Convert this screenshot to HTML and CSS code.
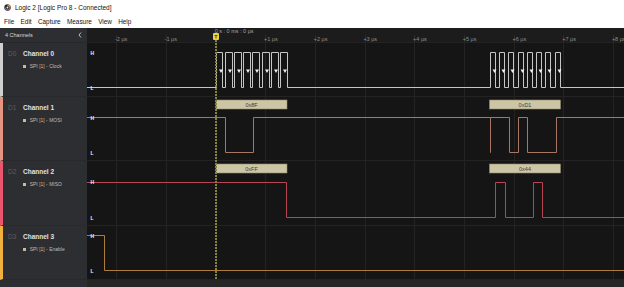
FILE: index.html
```html
<!DOCTYPE html>
<html>
<head>
<meta charset="utf-8" />
<title>Logic 2 [Logic Pro 8 - Connected]</title>
<link rel="stylesheet" href="styles.css">
</head>
<body>

<svg class="defs" width="0" height="0">
  <defs>
    <path id="grid" d="M29.5 0V65M79.5 0V65M129.5 0V65M178.5 0V65M228.5 0V65M278.5 0V65M327.5 0V65M377.5 0V65M427.5 0V65M476.5 0V65M526.5 0V65" />
  </defs>
</svg>

<div class="titlebar">
  <svg class="app-icon" width="7" height="7" viewBox="0 0 7 7">
    <circle cx="3.5" cy="3.5" r="3.2" fill="#2a2a2a" />
    <path d="M3.5 1.2 A2.3 2.3 0 0 1 5.8 3.5" stroke="#f39a1e" stroke-width="1.2" fill="none" />
    <path d="M5.8 3.5 A2.3 2.3 0 0 1 3.5 5.8" stroke="#e2383f" stroke-width="1.2" fill="none" />
    <path d="M3.5 5.8 A2.3 2.3 0 0 1 1.2 3.5" stroke="#3a7bd5" stroke-width="1.2" fill="none" />
    <circle cx="3.5" cy="3.5" r="0.9" fill="#f5f5f5" />
  </svg>
  <span>Logic 2 [Logic Pro 8 - Connected]</span>
</div>

<div class="menubar">
  <span>File</span>
  <span>Edit</span>
  <span>Capture</span>
  <span>Measure</span>
  <span>View</span>
  <span>Help</span>
</div>

<div class="workspace">

  <div class="panel-head">
    <span>4 Channels</span>
    <svg class="collapse" width="4" height="6" viewBox="0 0 4 6"><path d="M3 0.5L1 3L3 5.5" /></svg>
  </div>
  <div class="ruler">
    <svg width="537" height="15" viewBox="0 0 537 15">
      <path class="ruler-grid" d="M29.5 7V15M79.5 7V15M178.5 7V15M228.5 7V15M278.5 7V15M327.5 7V15M377.5 7V15M427.5 7V15M476.5 7V15M526.5 7V15" />
      <text class="tick" x="28" y="10.5">-2 µs</text>
      <text class="tick" x="77.6" y="10.5">-1 µs</text>
      <text class="tick" x="177" y="10.5">+1 µs</text>
      <text class="tick" x="226.7" y="10.5">+2 µs</text>
      <text class="tick" x="276.4" y="10.5">+3 µs</text>
      <text class="tick" x="326.1" y="10.5">+4 µs</text>
      <text class="tick" x="375.8" y="10.5">+5 µs</text>
      <text class="tick" x="425.5" y="10.5">+6 µs</text>
      <text class="tick" x="475.2" y="10.5">+7 µs</text>
      <text class="tick" x="524.9" y="10.5">+8 µs</text>
      <text class="cursor-time" x="127.7" y="3.2">0 s : 0 ms : 0 µs</text>
      <rect class="marker" x="126" y="5" width="6" height="7" rx="1" />
      <path class="marker-glyph" d="M127.5 7.5H130.5M129 7.5V10.5" />
    </svg>
  </div>

  <!-- D0 -->
  <div class="chan ch0">
    <div class="chan-name"><span class="chan-id">D0</span>Channel 0</div>
    <div class="chan-sub"><i class="swatch"></i>SPI [1] - Clock</div>
  </div>
  <div class="wave">
    <svg width="537" height="53" viewBox="0 0 537 53">
      <use href="#grid" class="grid" />
      <path class="sig sig0" d="M0 44.5H129.5V9.5H135.5V44.5H138.5V9.5H145.5V44.5H147.5V9.5H154.5V44.5H156.5V9.5H163.5V44.5H165.5V9.5H172.5V44.5H175.5V9.5H182.5V44.5H184.5V9.5H191.5V44.5H193.5V9.5H200.5V44.5H403.5V9.5H408.5V44.5H412.5V9.5H417.5V44.5H421.5V9.5H426.5V44.5H431.5V9.5H436.5V44.5H440.5V9.5H445.5V44.5H449.5V9.5H454.5V44.5H458.5V9.5H463.5V44.5H468.5V9.5H473.5V44.5H537" />
      <g class="edge">
        <polygon points="132,26.5 136,26.5 134,30" />
        <polygon points="141,26.5 145,26.5 143,30" />
        <polygon points="150,26.5 154,26.5 152,30" />
        <polygon points="159,26.5 163,26.5 161,30" />
        <polygon points="168,26.5 172,26.5 170,30" />
        <polygon points="178,26.5 182,26.5 180,30" />
        <polygon points="187,26.5 191,26.5 189,30" />
        <polygon points="196,26.5 200,26.5 198,30" />
        <polygon points="405.5,26.5 409.5,26.5 407.5,30" />
        <polygon points="414.5,26.5 418.5,26.5 416.5,30" />
        <polygon points="423.5,26.5 427.5,26.5 425.5,30" />
        <polygon points="433.5,26.5 437.5,26.5 435.5,30" />
        <polygon points="442.5,26.5 446.5,26.5 444.5,30" />
        <polygon points="451.5,26.5 455.5,26.5 453.5,30" />
        <polygon points="460.5,26.5 464.5,26.5 462.5,30" />
        <polygon points="470.5,26.5 474.5,26.5 472.5,30" />
      </g>
      <text class="lvl" x="3.5" y="10">H</text>
      <text class="lvl" x="3.5" y="45">L</text>
    </svg>
  </div>

  <!-- D1 -->
  <div class="chan ch1">
    <div class="chan-name"><span class="chan-id">D1</span>Channel 1</div>
    <div class="chan-sub"><i class="swatch"></i>SPI [1] - MOSI</div>
  </div>
  <div class="wave">
    <svg width="537" height="63" viewBox="0 0 537 63">
      <use href="#grid" class="grid" />
      <rect class="bubble" x="129" y="3" width="71" height="9" />
      <text class="bubble-text" x="164.5" y="7.7">0x8F</text>
      <rect class="bubble" x="402.5" y="3" width="71" height="9" />
      <text class="bubble-text" x="438" y="7.7">0xD1</text>
      <path class="sig sig1" d="M0 20.5H138.5V55.5H166.5V20.5H403.5V55.5V20.5H422.5V55.5H431.5V20.5H440.5V55.5H469.5V20.5H537" />
      <text class="lvl" x="3.5" y="20.5">H</text>
      <text class="lvl" x="3.5" y="56">L</text>
    </svg>
  </div>

  <!-- D2 -->
  <div class="chan ch2">
    <div class="chan-name"><span class="chan-id">D2</span>Channel 2</div>
    <div class="chan-sub"><i class="swatch"></i>SPI [1] - MISO</div>
  </div>
  <div class="wave">
    <svg width="537" height="64" viewBox="0 0 537 64">
      <use href="#grid" class="grid" />
      <rect class="bubble" x="129" y="3" width="71" height="9" />
      <text class="bubble-text" x="164.5" y="7.7">0xFF</text>
      <rect class="bubble" x="402.5" y="3" width="71" height="9" />
      <text class="bubble-text" x="438" y="7.7">0x44</text>
      <path class="sig sig2" d="M0 21.5H199.5V56.5H408.5V21.5H418.5V56.5H446.5V21.5H455.5V56.5H537" />
      <text class="lvl" x="3.5" y="21">H</text>
      <text class="lvl" x="3.5" y="56.5">L</text>
    </svg>
  </div>

  <!-- D3 -->
  <div class="chan ch3">
    <div class="chan-name"><span class="chan-id">D3</span>Channel 3</div>
    <div class="chan-sub"><i class="swatch"></i>SPI [1] - Enable</div>
  </div>
  <div class="wave">
    <svg width="537" height="53" viewBox="0 0 537 53">
      <use href="#grid" class="grid" />
      <path class="sig sig3" d="M0 9.5H17.5V44.5H537" />
      <text class="lvl" x="3.5" y="9.5">H</text>
      <text class="lvl" x="3.5" y="45.3">L</text>
    </svg>
  </div>

  <div class="panel-foot"></div>
  <div class="wave-foot"></div>

  <div class="cursor-line"></div>
</div>

</body>
</html>
```

FILE: styles.css
```css
* {
  box-sizing: border-box;
}

html, body {
  margin: 0;
  padding: 0;
}

body {
  width: 624px;
  height: 287px;
  overflow: hidden;
  background: #fff;
  font-family: "Liberation Sans", Arial, sans-serif;
}

.defs {
  position: absolute;
  width: 0;
  height: 0;
}

/* window chrome */
.titlebar {
  height: 14px;
  display: flex;
  align-items: center;
  gap: 4px;
  padding-left: 4px;
  font-size: 6.5px;
  color: #111;
}

.app-icon {
  display: block;
}

.menubar {
  height: 14px;
  display: flex;
  align-items: center;
  gap: 6.3px;
  padding-left: 4px;
  font-size: 6.4px;
  color: #111;
}

/* main area */
.workspace {
  position: relative;
  display: grid;
  grid-template-columns: 87px 537px;
  grid-template-rows: 15px 54px 64px 65px 54px 7px;
  height: 259px;
  background: #151515;
}

.panel-head {
  background: #2d2e32;
  border-bottom: 1px solid #26272a;
  display: flex;
  align-items: center;
  justify-content: space-between;
  padding: 0 5px 0 5px;
  font-size: 5.5px;
  color: #d6d6d6;
}

.collapse path {
  fill: none;
  stroke: #cfcfcf;
  stroke-width: 0.9;
}

.ruler {
  background: #1c1c1c;
  border-bottom: 1px solid #222;
  overflow: hidden;
}

.ruler svg,
.wave svg {
  display: block;
  overflow: hidden;
}

.ruler-grid {
  stroke: #2c2c2c;
  stroke-width: 1;
}

svg text {
  font-family: "Liberation Sans", Arial, sans-serif;
  dominant-baseline: central;
}

.tick {
  font-size: 5.5px;
  fill: #8e8e8e;
}

.cursor-time {
  font-size: 5.5px;
  fill: #a2a2a2;
}

.marker {
  fill: #e8d24a;
}

.marker-glyph {
  stroke: #5b5222;
  stroke-width: 1;
}

/* channel list */
.chan {
  background: #2d2e32;
  border-left: 3px solid #cfcfcf;
  border-bottom: 1px solid #28292c;
  padding: 6px 0 0 5px;
  display: flex;
  flex-direction: column;
  gap: 4px;
}

.ch1 { border-left-color: #e3957f; }
.ch2 { border-left-color: #ec5570; }
.ch3 { border-left-color: #f2b13d; }

.chan-name {
  height: 9px;
  display: flex;
  align-items: center;
  font-size: 6.5px;
  font-weight: bold;
  color: #e2e2e2;
}

.chan-id {
  width: 15px;
  font-weight: normal;
  color: #5c5d61;
}

.chan-sub {
  height: 8px;
  display: flex;
  align-items: center;
  gap: 3.7px;
  padding-left: 15px;
  font-size: 5px;
  color: #bcbcbc;
}

.swatch {
  width: 3px;
  height: 3px;
  background: #c9bd8f;
}

.panel-foot {
  background: #2d2e32;
}

/* waveforms */
.wave {
  border-bottom: 1px solid #232323;
  overflow: hidden;
}

.wave-foot {
  background: #262626;
}

.grid {
  stroke: #232323;
  stroke-width: 1;
}

.sig {
  fill: none;
  stroke-width: 1;
}

.sig0 { stroke: #c6c6c6; }
.sig1 { stroke: #a97664; }
.sig2 { stroke: #b64556; }
.sig3 { stroke: #ad7d3c; }

.edge polygon {
  fill: #f2f2f2;
}

.lvl {
  font-size: 5px;
  font-weight: bold;
  fill: #f0f0f0;
}

.bubble {
  fill: #cdc6a6;
  stroke: #8e886f;
  stroke-width: 0.6;
}

.bubble-text {
  font-size: 5.5px;
  fill: #3c3c34;
  text-anchor: middle;
}

.cursor-line {
  position: absolute;
  left: 215px;
  top: 12px;
  bottom: 7px;
  width: 2px;
  background: repeating-linear-gradient(to bottom, #86843c 0 2px, transparent 2px 3px);
}
```
